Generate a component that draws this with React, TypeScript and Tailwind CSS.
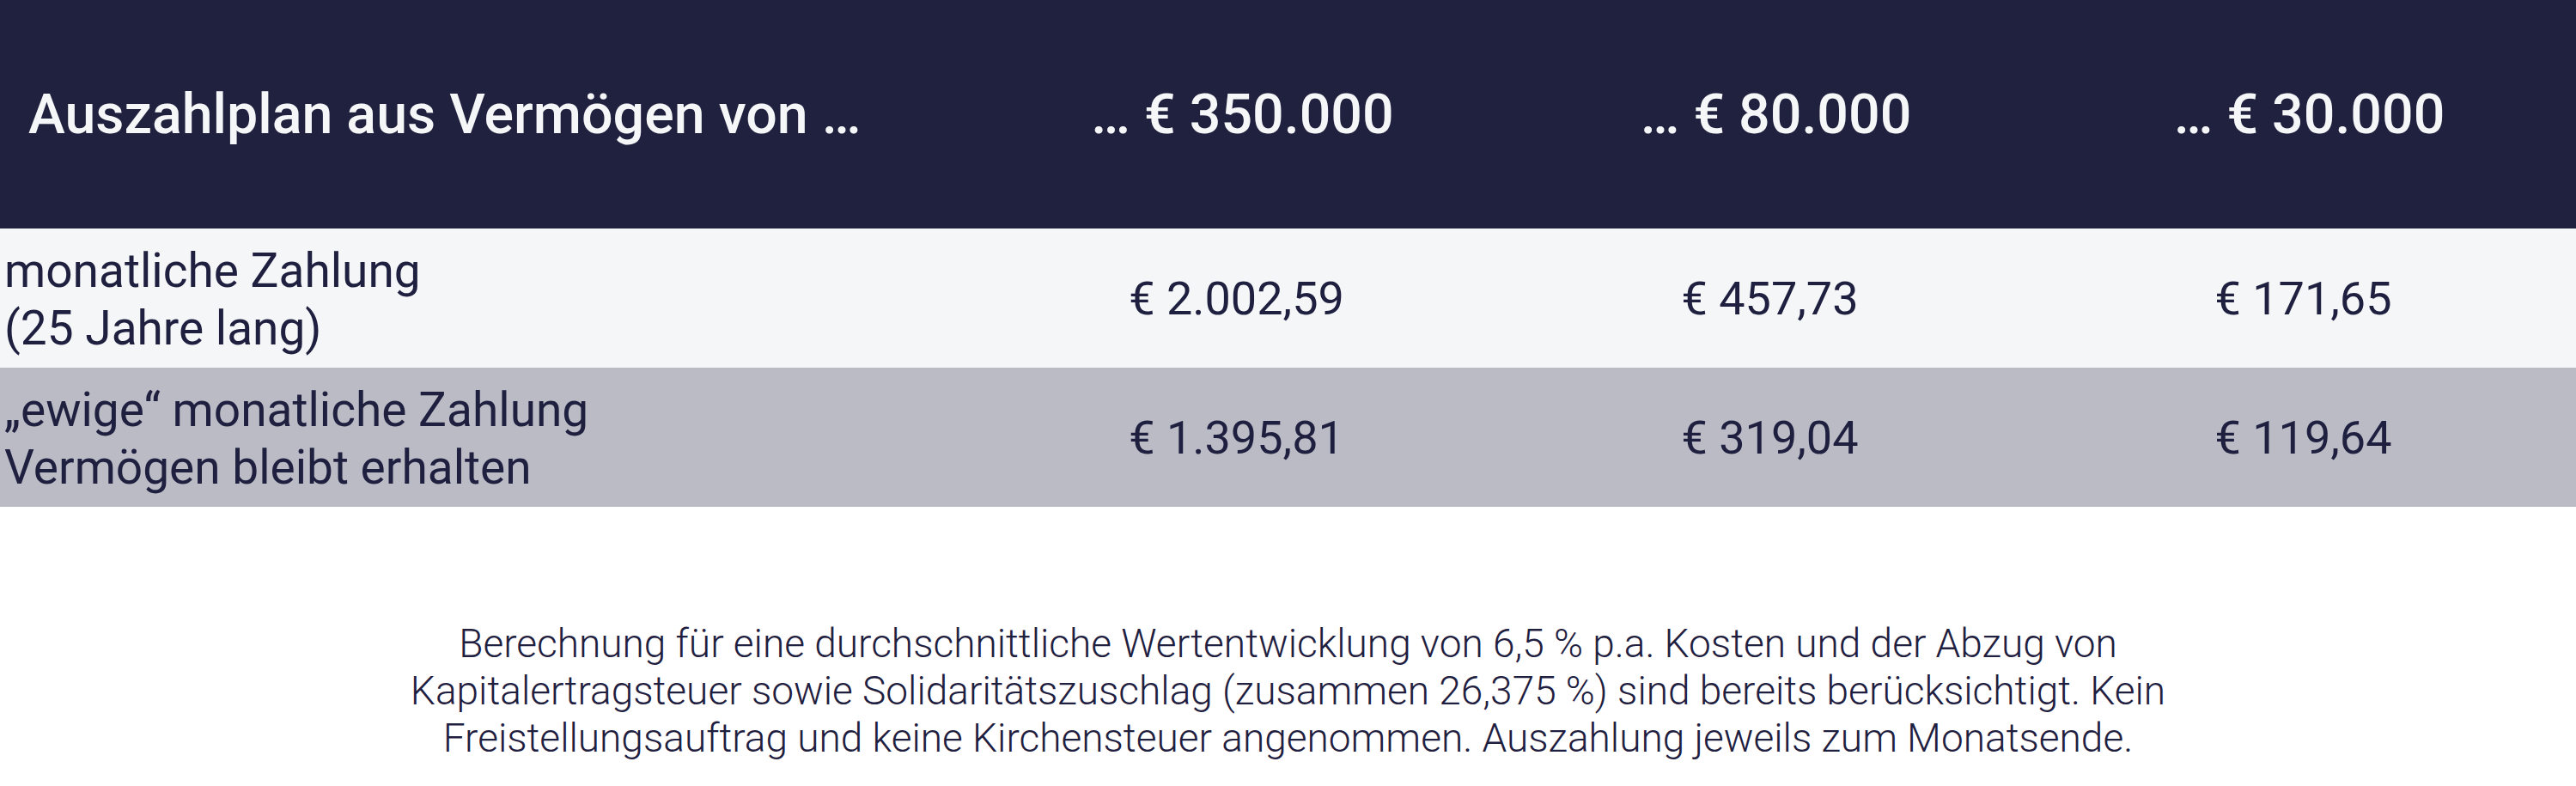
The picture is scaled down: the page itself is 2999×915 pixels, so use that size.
const rows = [
  {
    label: ["monatliche Zahlung", "(25 Jahre lang)"],
    values: ["€ 2.002,59", "€ 457,73", "€ 171,65"],
    bg: "bg-[#f5f6f8]",
  },
  {
    label: ["„ewige“ monatliche Zahlung", "Vermögen bleibt erhalten"],
    values: ["€ 1.395,81", "€ 319,04", "€ 119,64"],
    bg: "bg-[#bbbbc5]",
  },
];

const amounts = ["… € 350.000", "… € 80.000", "… € 30.000"];

export default function App() {
  return (
    <div className="w-[2999px] bg-white font-['Roboto',sans-serif] text-[#1f2040]">
      {/* Header */}
      <div className="grid h-[266px] grid-cols-[1136px_1fr_1fr_1fr] items-center bg-[#20213f] text-[64.5px] font-medium text-[#f5f6f8]">
        <div className="pl-[33px]">Auszahlplan aus Vermögen von …</div>
        {amounts.map((a) => (
          <div key={a} className="text-center">
            {a}
          </div>
        ))}
      </div>

      {/* Rows */}
      {rows.map((row, i) => (
        <div
          key={i}
          className={`grid h-[162px] grid-cols-[1136px_1fr_1fr_1fr] items-center ${row.bg}`}
        >
          <div className="pt-[3px] pl-[5px] text-[55px] leading-[67px]">
            {row.label.map((l) => (
              <div key={l}>{l}</div>
            ))}
          </div>
          {row.values.map((v) => (
            <div key={v} className="pr-[14px] text-center text-[54px]">
              {v}
            </div>
          ))}
        </div>
      ))}

      {/* Footnote */}
      <div className="pt-[132px] pb-[40px] text-center text-[46px] font-light leading-[55px]">
        <p>Berechnung für eine durchschnittliche Wertentwicklung von 6,5 % p.a. Kosten und der Abzug von</p>
        <p>Kapitalertragsteuer sowie Solidaritätszuschlag (zusammen 26,375 %) sind bereits berücksichtigt. Kein</p>
        <p>Freistellungsauftrag und keine Kirchensteuer angenommen. Auszahlung jeweils zum Monatsende.</p>
      </div>
    </div>
  );
}
